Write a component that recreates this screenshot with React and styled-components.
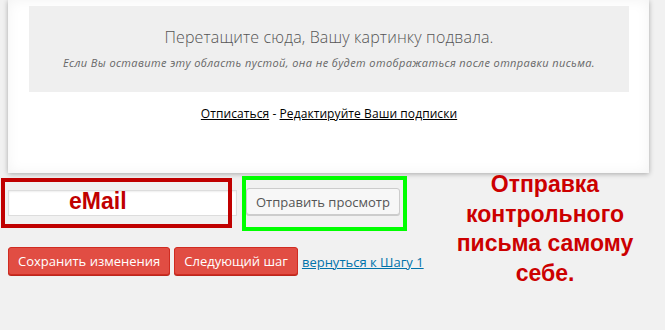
import React from 'react'
import styled, { createGlobalStyle } from 'styled-components'

const Global = createGlobalStyle`
    html, body {
        margin: 0;
        padding: 0;
        background: #f1f1f1;
        font-family: "Open Sans", "Noto Sans", sans-serif;
    }
`
const Page = styled.div`
    width: 665px;
    height: 330px;
    overflow: hidden;
    background: #f1f1f1;
`
const Card = styled.div`
    margin-left: 8px;
    width: 641px;
    height: 173px;
    box-sizing: border-box;
    padding: 6px 20px 0 21px;
    background: #fff;
    box-shadow: 0 1px 5px rgba(0, 0, 0, 0.3), inset 0 0 14px rgba(0, 0, 0, 0.05);
`
const DropZone = styled.div`
    background: #efefef;
    padding: 20px 0;
    text-align: center;
    color: #555;
`
const DropTitle = styled.div`
    font-size: 16px;
    line-height: 22px;
    font-weight: 300;
    letter-spacing: 0.15px;
`
const DropHint = styled.div`
    margin-top: 6px;
    font-size: 11px;
    line-height: 18px;
    font-style: italic;
    letter-spacing: 0.4px;
    color: #666;
`
const Footer = styled.div`
    margin-top: 13px;
    text-align: center;
    font-size: 12px;
    line-height: 18px;
    letter-spacing: 0.08px;
    color: #000;
    a {
        color: #000;
        text-decoration: underline;
    }
`
const Form = styled.div`
    position: relative;
    padding-left: 8px;
`
const Row = styled.div`
    display: flex;
    align-items: flex-start;
    gap: ${p => p.$gap}px;
    padding-top: ${p => p.$top}px;
`
const Input = styled.input`
    margin-top: 2px;
    width: 229px;
    height: 26px;
    box-sizing: border-box;
    border: 1px solid #ddd;
    background: #fff;
    box-shadow: inset 0 1px 2px rgba(0, 0, 0, 0.07);
    outline: none;
`
const Button = styled.button`
    height: ${p => p.$h}px;
    box-sizing: border-box;
    padding: 0 ${p => p.$pad}px;
    border-radius: 3px;
    font-family: "Open Sans", "Noto Sans", sans-serif;
    font-size: 13px;
    white-space: nowrap;
    cursor: pointer;
    border: 1px solid ${p => (p.$primary ? '#d02c21' : '#ccc')};
    background: ${p => (p.$primary ? '#e14d43' : '#f7f7f7')};
    color: ${p => (p.$primary ? '#fff' : '#555')};
    box-shadow: 0 1px 0 ${p => (p.$primary ? '#ba281e' : '#ccc')};
`
const BackLink = styled.a`
    align-self: center;
    font-size: 13px;
    color: #0073aa;
    text-decoration: underline;
    margin-top: 2px;
`
const Frame = styled.div`
    position: absolute;
    left: ${p => p.$x}px;
    top: ${p => p.$y}px;
    width: ${p => p.$w}px;
    height: ${p => p.$h}px;
    box-sizing: border-box;
    border: 4px solid ${p => p.$color};
    pointer-events: none;
`
const EmailLabel = styled.div`
    position: absolute;
    left: 69px;
    top: 15px;
    font-family: "Liberation Sans", Arial, sans-serif;
    font-weight: bold;
    font-size: 23px;
    line-height: 26px;
    color: #c00000;
`
const Callout = styled.div`
    position: absolute;
    left: 430px;
    top: -3px;
    width: 230px;
    text-align: center;
    font-family: "Liberation Sans", Arial, sans-serif;
    font-weight: bold;
    font-size: 23px;
    line-height: 29.5px;
    color: #cc0000;
`

export default function App() {
    return (
        <Page>
            <Global />
            <Card>
                <DropZone>
                    <DropTitle>Перетащите сюда, Вашу картинку подвала.</DropTitle>
                    <DropHint>
                        Если Вы оставите эту область пустой, она не будет отображаться после отправки письма.
                    </DropHint>
                </DropZone>
                <Footer>
                    <a href="#">Отписаться</a> - <a href="#">Редактируйте Ваши подписки</a>
                </Footer>
            </Card>
            <Form>
                <Row $gap={9} $top={15}>
                    <Input type="text" />
                    <Button $h={27} $pad={9}>Отправить просмотр</Button>
                </Row>
                <Row $gap={4} $top={31}>
                    <Button $primary $h={28} $pad={9}>Сохранить изменения</Button>
                    <Button $primary $h={28} $pad={9}>Следующий шаг</Button>
                    <BackLink href="#">вернуться к Шагу 1</BackLink>
                </Row>
                <Frame $x={1} $y={5} $w={231} $h={50} $color="#c00000" />
                <Frame $x={242} $y={3} $w={165} $h={55} $color="#00ff00" />
                <EmailLabel>eMail</EmailLabel>
                <Callout>
                    Отправка
                    <br />
                    контрольного
                    <br />
                    письма самому
                    <br />
                    себе.
                </Callout>
            </Form>
        </Page>
    )
}
